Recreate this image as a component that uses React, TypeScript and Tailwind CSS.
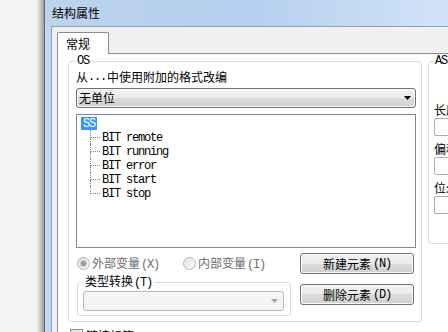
const items = ["remote", "running", "error", "start", "stop"];

const raised =
  "border border-[#707070] rounded-[3px] bg-[linear-gradient(to_bottom,#f2f2f2_0%,#ebebeb_50%,#dddddd_50%,#cfcfcf_100%)] shadow-[inset_0_0_0_1px_#fbfbfb]";

const mono = "font-['Liberation_Mono',monospace] text-[12px] tracking-[-1.2px]";

function Radio({ checked }: { checked?: boolean }) {
  return (
    <div className="w-[13px] h-[13px] rounded-full border border-[#b4b4b4] bg-[linear-gradient(135deg,#e2e2e2,#fbfbfb)] flex items-center justify-center shrink-0">
      {checked && <div className="w-[5px] h-[5px] rounded-full bg-[#9c9c9c] ring-1 ring-[#c8c8c8]" />}
    </div>
  );
}

export default function App() {
  return (
    <div className="w-[448px] h-[332px] overflow-hidden bg-[#f3f3f3] flex font-['Noto_Sans_CJK_SC',sans-serif] text-[12px] text-black">
      {/* desktop + window shadow */}
      <div className="w-[44px] shrink-0 flex justify-end">
        <div className="w-[7px] h-full bg-gradient-to-r from-[#f3f3f3] to-[#9c9c9c]" />
      </div>

      <div className="flex-1 flex flex-col border-l border-[#5d6774] min-w-0">
        <div className="h-[26px] shrink-0 bg-gradient-to-r from-[#bcd3ec] via-[#b5cfef] to-[#d1e3f7] pl-[7px] flex items-center">
          <span className="leading-none">结构属性</span>
        </div>

        <div className="flex-1 flex min-h-0">
          <div className="w-[6px] shrink-0 bg-[#c2d8f0]" />
          <div className="flex-1 min-w-0 bg-[#f0f0f0] border-l border-t border-[#8c9fb6] pt-[5px] pl-[5px] flex flex-col">
            {/* tab */}
            <div className="relative z-10 -mb-px w-[52px] h-[22px] bg-white border border-b-0 border-[#898c95] rounded-t-[2px] pl-[8px] flex items-center">
              常规
            </div>

            {/* tab page */}
            <div className="flex-1 min-w-0 overflow-hidden bg-white border-t border-l border-[#898c95] pl-[10px]">
              <div className="flex items-start gap-[6px]">
                {/* OS group */}
                <fieldset className="w-[354px] shrink-0 border border-[#d5dfe5] rounded-[3px] pl-[7px] pr-[5px] pb-[5px]">
                  <legend className={`px-[1px] ${mono} leading-[14px]`}>OS</legend>
                  <div className="mt-[2px] leading-[14px] flex">
                    <span>从</span>
                    <span className={`${mono} w-[19px] shrink-0`}>...</span>
                    <span>中使用附加的格式改编</span>
                  </div>

                  <div className={`mt-[4px] h-[20px] ${raised} flex items-center pl-[2px] pr-[4px]`}>
                    <span className="flex-1 leading-none">无单位</span>
                    <svg width="7" height="4" viewBox="0 0 7 4">
                      <path d="M0 0h7L3.5 4z" fill="#000" />
                    </svg>
                  </div>

                  {/* tree */}
                  <div className="mt-[6px] h-[134px] border border-[#828790] bg-white pl-[4px] pt-[2px]">
                    <div className={`w-[16px] h-[13px] bg-[#3399ff] text-white flex items-center justify-center ${mono} leading-none`}>
                      SS
                    </div>
                    {items.map((it, i) => (
                      <div key={it} className="flex h-[14px] ml-[9px]">
                        <div className="w-[10px] flex flex-col">
                          <div className="h-[8px] border-l border-b border-dotted border-[#8a8a8a]" />
                          <div
                            className={
                              i < items.length - 1
                                ? "h-[6px] border-l border-dotted border-[#8a8a8a]"
                                : "h-[6px]"
                            }
                          />
                        </div>
                        <span className={`ml-[2px] mt-[1px] leading-[15px] ${mono} whitespace-pre`}>BIT {it}</span>
                      </div>
                    ))}
                  </div>

                  {/* lower part */}
                  <div className="flex">
                    <div className="w-[215px] shrink-0">
                      <div className="mt-[9px] h-[13px] flex items-center text-[#6d6d6d]">
                        <div className="w-[106px] ml-[1px] flex items-center">
                          <Radio checked />
                          <span className="ml-[2px] leading-none">
                            外部变量<span className={`${mono} ml-[1px]`}>(X)</span>
                          </span>
                        </div>
                        <div className="flex items-center">
                          <Radio />
                          <span className="ml-[2px] leading-none">
                            内部变量<span className={`${mono} ml-[1px]`}>(I)</span>
                          </span>
                        </div>
                      </div>

                      <fieldset className="mt-[4px] ml-[1px] border border-[#d5dfe5] rounded-[3px] pl-[5px] pr-[6px] pb-[4px]">
                        <legend className="px-[2px] leading-[14px]">
                          类型转换<span className={`${mono} ml-[1px]`}>(T)</span>
                        </legend>
                        <div className="mt-[1px] h-[20px] rounded-[3px] border border-[#b6babd] bg-[#f4f4f4] flex items-center justify-end pr-[5px]">
                          <svg width="7" height="4" viewBox="0 0 7 4">
                            <path d="M0 0h7L3.5 4z" fill="#a2a2a2" />
                          </svg>
                        </div>
                      </fieldset>
                    </div>

                    <div className="ml-[9px] flex flex-col">
                      <button className={`mt-[5px] w-[114px] h-[21px] ${raised} flex items-center justify-center leading-none`}>
                        新建元素<span className={`${mono} ml-[2px]`}>(N)</span>
                      </button>
                      <button className={`mt-[10px] w-[114px] h-[21px] ${raised} flex items-center justify-center leading-none`}>
                        删除元素<span className={`${mono} ml-[2px]`}>(D)</span>
                      </button>
                    </div>
                  </div>
                </fieldset>

                {/* AS group */}
                <fieldset className="w-[120px] shrink-0 border border-[#d5dfe5] rounded-[3px] pl-[5px] pr-[6px] pb-[29px]">
                  <legend className={`px-[1px] ${mono} leading-[14px]`}>AS</legend>
                  <div className="mt-[35px] leading-[14px]">长度:</div>
                  <div className="mt-[1px] h-[18px] border border-[#abadb3] rounded-[2px] bg-white" />
                  <div className="mt-[6px] leading-[14px]">偏移:</div>
                  <div className="mt-[1px] h-[18px] border border-[#abadb3] rounded-[2px] bg-white" />
                  <div className="mt-[6px] leading-[14px]">位:</div>
                  <div className="mt-[1px] h-[18px] border border-[#abadb3] rounded-[2px] bg-white" />
                </fieldset>
              </div>

              <div className="mt-[7px] ml-[2px] flex items-start">
                <div className="w-[13px] h-[13px] border border-[#8f8f8f] bg-[linear-gradient(135deg,#dcdcdc,#fbfbfb)]" />
                <span className="ml-[3px] leading-[14px]">链接标签</span>
              </div>
            </div>
          </div>
        </div>
      </div>
    </div>
  );
}
